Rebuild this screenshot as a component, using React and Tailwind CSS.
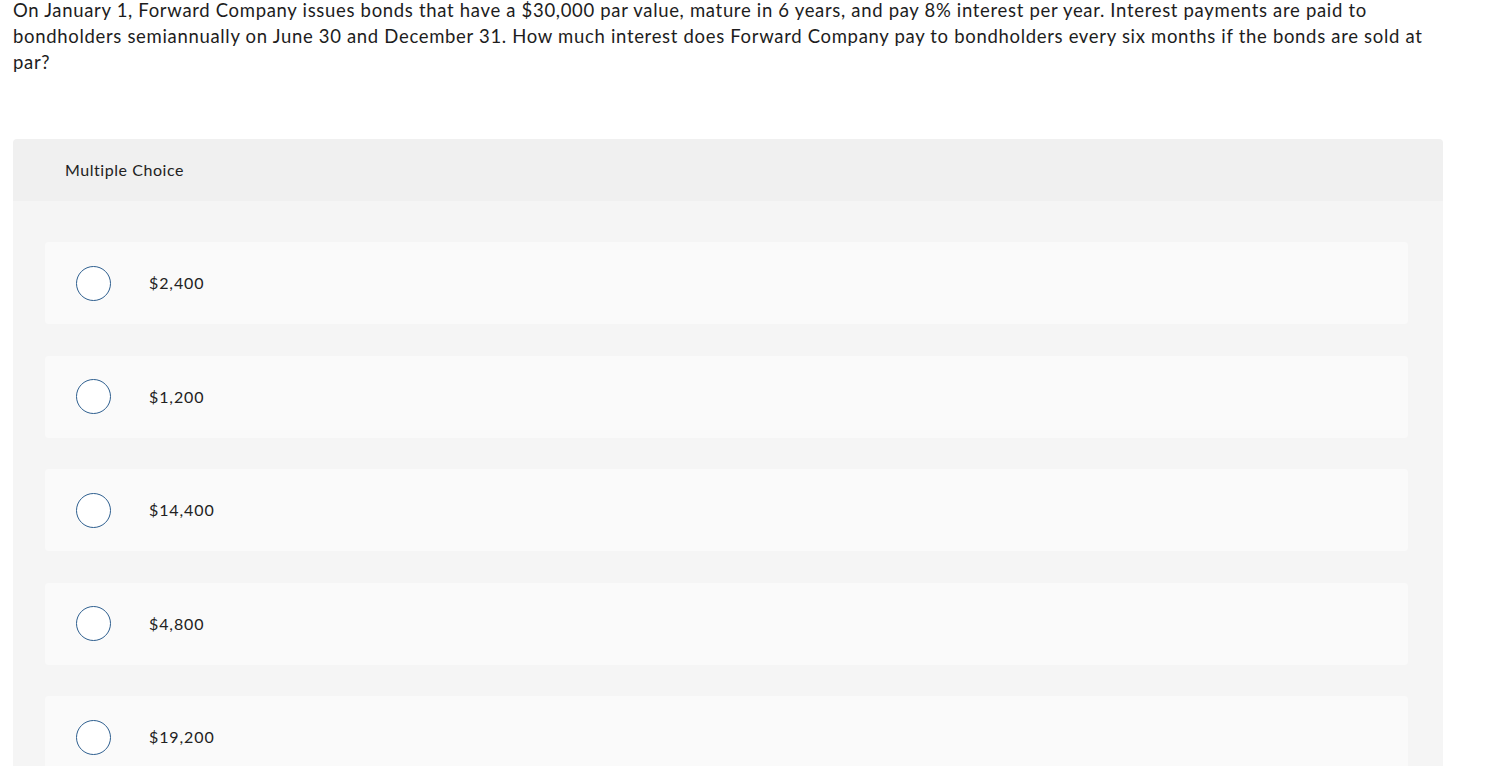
import React from "react";

const options = ["$2,400", "$1,200", "$14,400", "$4,800", "$19,200"];

export default function App() {
  return (
    <div className="h-[766px] overflow-hidden bg-white text-[#1d1d1d]" style={{ fontFamily: "Lato, 'Open Sans', sans-serif" }}>
      <div className="pl-[13px] w-[1460px]">
        <p className="-mt-[3px] text-[18.5px] leading-[26px] tracking-[0.68px]">
          On January 1, Forward Company issues bonds that have a $30,000 par value, mature in 6 years, and pay 8% interest per year. Interest payments are paid to bondholders semiannually on June 30 and December 31. How much interest does Forward Company pay to bondholders every six months if the bonds are sold at par?
        </p>
      </div>
      <div className="ml-[13px] mt-[64px] w-[1430px] rounded-t-[4px] overflow-hidden">
        <div className="h-[62px] bg-[#f0f0f0] pl-[52px] flex items-center text-[16px] tracking-[0.55px] text-[#222]">
          Multiple Choice
        </div>
        <div className="bg-[#f5f5f5] pt-[41px] pl-[32px] pr-[35px] pb-[40px] flex flex-col gap-[31.5px]">
          {options.map((o) => (
            <div key={o} className="h-[82px] rounded-[4px] bg-[#fafafa] flex items-center pl-[31px]">
              <div className="w-[35px] h-[35px] rounded-full border-[1.5px] border-[#2e5f8f] bg-white shrink-0" />
              <span className="ml-[38px] text-[16px] tracking-[0.9px] text-[#222]">{o}</span>
            </div>
          ))}
        </div>
      </div>
    </div>
  );
}
